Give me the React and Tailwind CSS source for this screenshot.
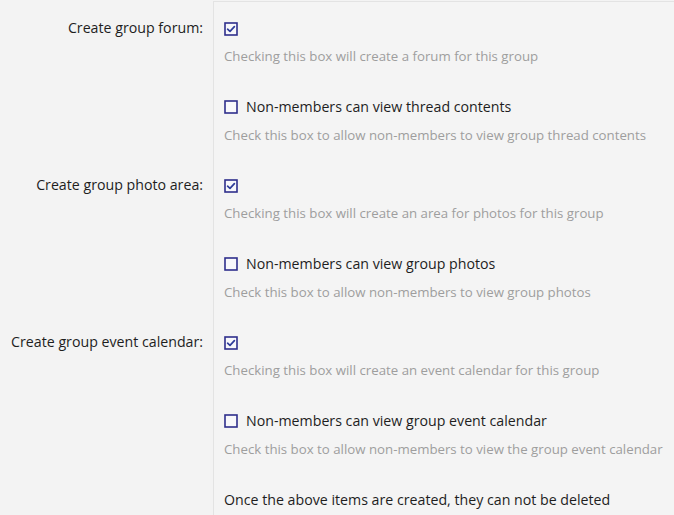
import React from "react";

function Box({ checked }) {
  return (
    <svg width="14" height="14" viewBox="0 0 14 14" className="shrink-0">
      <rect x="1" y="1" width="12" height="12" fill="#f8f8fb" stroke="#2f2f8c" strokeWidth="1.6" />
      {checked && (
        <path d="M3.6 7.2 L6 9.4 L10.4 4.6" fill="none" stroke="#2f3d9a" strokeWidth="1.7" strokeLinecap="round" strokeLinejoin="round" />
      )}
    </svg>
  );
}

const groups = [
  {
    label: "Create group forum:",
    desc: "Checking this box will create a forum for this group",
    sub: "Non-members can view thread contents",
    subDesc: "Check this box to allow non-members to view group thread contents",
  },
  {
    label: "Create group photo area:",
    desc: "Checking this box will create an area for photos for this group",
    sub: "Non-members can view group photos",
    subDesc: "Check this box to allow non-members to view group photos",
  },
  {
    label: "Create group event calendar:",
    desc: "Checking this box will create an event calendar for this group",
    sub: "Non-members can view group event calendar",
    subDesc: "Check this box to allow non-members to view the group event calendar",
  },
];

export default function App() {
  return (
    <div
      className="w-[674px] h-[515px] overflow-hidden bg-[#f3f3f3] flex text-[#1e1e1e]"
      style={{ fontFamily: '"Open Sans", "Noto Sans", sans-serif' }}
    >
      <div className="w-[213px] shrink-0 pt-[18px] flex flex-col gap-[30px]">
        {groups.map((g) => (
          <div key={g.label} className="h-[127px] pr-[10px] text-right text-[14.2px] leading-[20px] whitespace-nowrap">
            {g.label}
          </div>
        ))}
      </div>
      <div className="flex-1 mt-[1px] border-t border-l border-[#e3e3e3] bg-[#f4f4f4] pl-[10px] pt-[17px]">
        <div className="flex flex-col gap-[30px]">
          {groups.map((g) => (
            <div key={g.label} className="flex flex-col">
              <div className="h-[20px] flex items-center">
                <Box checked />
              </div>
              <div className="mt-[7px] h-[20px] leading-[20px] text-[13.25px] text-[#9e9e9e] whitespace-nowrap">
                {g.desc}
              </div>
              <div className="mt-[31px] h-[20px] flex items-center gap-[8px] text-[14.2px] whitespace-nowrap">
                <Box />
                <span className="leading-[20px]">{g.sub}</span>
              </div>
              <div className="mt-[8px] h-[20px] leading-[20px] text-[13.25px] text-[#9e9e9e] whitespace-nowrap">
                {g.subDesc}
              </div>
              <div className="h-[1px]" />
            </div>
          ))}
        </div>
        <div className="mt-[30px] h-[20px] leading-[20px] text-[14.2px] whitespace-nowrap">
          Once the above items are created, they can not be deleted
        </div>
      </div>
    </div>
  );
}
